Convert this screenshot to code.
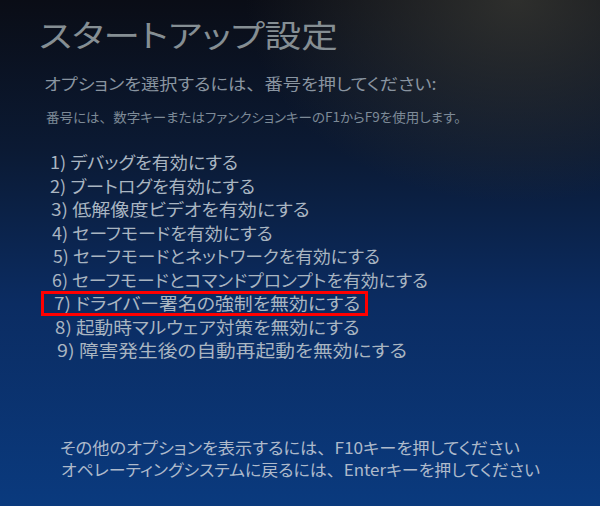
const options = [
  { label: '1) デバッグを有効にする', indent: 'ml-[50px]', stretch: 'scale-x-[1.065]' },
  { label: '2) ブートログを有効にする', indent: 'ml-[50px]', stretch: 'scale-x-[1.065]' },
  { label: '3) 低解像度ビデオを有効にする', indent: 'ml-[51px]', stretch: 'scale-x-[1.12]' },
  { label: '4) セーフモードを有効にする', indent: 'ml-[52px]', stretch: 'scale-x-[1.06]' },
  { label: '5) セーフモードとネットワークを有効にする', indent: 'ml-[53px]', stretch: 'scale-x-[1.044]' },
  { label: '6) セーフモードとコマンドプロンプトを有効にする', indent: 'ml-[52px]', stretch: 'scale-x-[1.048]' },
  { label: '7) ドライバー署名の強制を無効にする', indent: 'ml-[54px]', stretch: 'scale-x-[1.11]', marked: true },
  { label: '8) 起動時マルウェア対策を無効にする', indent: 'ml-[55px]', stretch: 'scale-x-[1.1]' },
  { label: '9) 障害発生後の自動再起動を無効にする', indent: 'ml-[57px]', stretch: 'scale-x-[1.158]' },
];

// full-width comma: keep it out of proportional spacing, as on the boot screen
const Comma = () => <span className="[font-feature-settings:normal]">、</span>;

export default function App() {
  return (
    <div
      className="h-[506px] w-[600px] overflow-hidden bg-[radial-gradient(ellipse_45%_40%_at_86%_0%,rgba(58,58,52,0.75),transparent),linear-gradient(to_bottom,#0a0d16,#0b1a34_30%,#0b2c62_60%,#0a3a7e)] text-[#a9b5c1] [font-feature-settings:'palt']"
      style={{ fontFamily: '"Noto Sans CJK JP", "Noto Sans", sans-serif' }}
    >
      {/* Title */}
      <h1 className="pl-[39px] pt-[16px] text-[31px] leading-[36px] font-normal text-[#858e93]">
        <span className="inline-block origin-left scale-x-[1.18] whitespace-nowrap">スタートアップ設定</span>
      </h1>

      {/* Instructions */}
      <p className="ml-[44px] mt-[19px] text-[16px] leading-[24px] text-[#8994a0]">
        <span className="inline-block origin-left scale-x-[1.14] whitespace-nowrap">
          オプションを選択するには<Comma />番号を押してください:
        </span>
      </p>
      <p className="ml-[46px] mt-[12px] text-[13px] leading-[20px] text-[#7d8a97]">
        <span className="inline-block origin-left scale-x-[1.04] whitespace-nowrap">
          番号には<Comma />数字キーまたはファンクションキーのF1からF9を使用します。
        </span>
      </p>

      {/* Options */}
      <ul className="mt-[23px] text-[17px] leading-[23.5px]">
        {options.map((opt) => (
          <li key={opt.label} className={`relative ${opt.indent}`}>
            <span className={`inline-block origin-left whitespace-nowrap ${opt.stretch}`}>{opt.label}</span>
            {opt.marked && (
              <span className="absolute left-[-13px] top-0 h-[25px] w-[327px] border-[3px] border-[#ff0000]" />
            )}
          </li>
        ))}
      </ul>

      {/* Footer hints */}
      <div className="mt-[74px] text-[16px] leading-[22px] text-[#aebacb]">
        <p className="ml-[60px]">
          <span className="inline-block origin-left scale-x-[1.078] whitespace-nowrap">
            その他のオプションを表示するには<Comma />F10キーを押してください
          </span>
        </p>
        <p className="ml-[61px]">
          <span className="inline-block origin-left scale-x-[1.059] whitespace-nowrap">
            オペレーティングシステムに戻るには<Comma />Enterキーを押してください
          </span>
        </p>
      </div>
    </div>
  );
}
